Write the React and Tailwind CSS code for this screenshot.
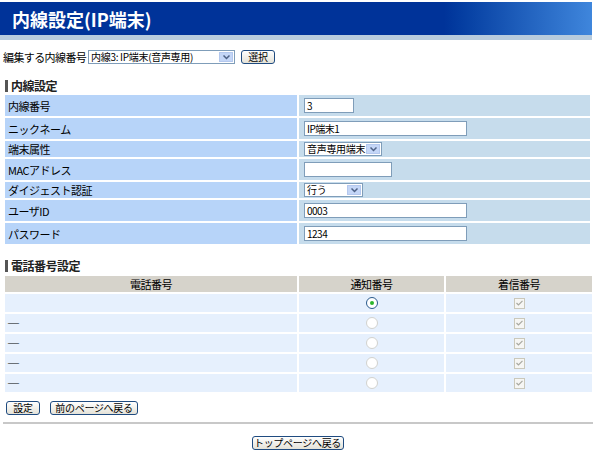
import React from "react";

const font = { fontFamily: '"Noto Sans CJK JP", "Noto Sans", sans-serif' };

function Btn({ children, className = "" }) {
  return (
    <button
      className={`h-[14px] px-[4px] border border-[#1f4b80] rounded-[3px] bg-gradient-to-b from-white to-[#e4e2d8] text-[10px] leading-[12px] tracking-[-0.3px] text-black whitespace-nowrap flex items-center justify-center ${className}`}
    >
      {children}
    </button>
  );
}

function TextBox({ value, w }) {
  return (
    <div
      className={`h-[15px] ${w} border border-[#7f9db9] bg-white text-[10px] leading-[13px] pl-[2px] whitespace-nowrap`}
    >
      {value}
    </div>
  );
}

function SelectBox({ value, w }) {
  return (
    <div className={`h-[14px] ${w} flex items-center border border-[#7f9db9] bg-white`}>
      <div className="flex-1 min-w-0 text-[10px] leading-[12px] pl-[2px] tracking-[-0.3px] whitespace-nowrap">{value}</div>
      <div className="w-[14px] h-[10px] mr-px bg-[#c4d6f7] border border-[#b4c8ee] flex items-center justify-center">
        <svg width="7" height="5" viewBox="0 0 7 5">
          <path d="M0.5 0.5 L3.5 3.5 L6.5 0.5" fill="none" stroke="#4d6185" strokeWidth="1.5" />
        </svg>
      </div>
    </div>
  );
}

function SectionTitle({ children }) {
  return (
    <div className="flex items-center gap-[3px] pl-[5px] h-[14px]">
      <span className="w-[3px] h-[12px] bg-[#555]" />
      <span className="text-[12px] leading-[14px] font-bold text-[#222] tracking-[-0.5px]">{children}</span>
    </div>
  );
}

function Radio({ checked }) {
  return checked ? (
    <span className="w-[12px] h-[12px] rounded-full border border-[#2a5a8c] bg-white flex items-center justify-center">
      <span className="w-[4px] h-[4px] rounded-full bg-[#2cb52c]" />
    </span>
  ) : (
    <span className="w-[12px] h-[12px] rounded-full border border-[#d2d2ce] bg-white" />
  );
}

function Check() {
  return (
    <span className="w-[11px] h-[11px] border border-[#cac8bb] bg-[#f6f6f4] flex items-center justify-center">
      <svg width="7" height="6" viewBox="0 0 7 6">
        <path d="M0.5 3 L2.5 5 L6.5 0.8" fill="none" stroke="#a8a8a0" strokeWidth="1.2" />
      </svg>
    </span>
  );
}

const rows = [
  { label: "内線番号", h: "h-[21px]", ctl: <TextBox value="3" w="w-[50px]" /> },
  { label: "ニックネーム", h: "h-[21px]", ctl: <TextBox value="IP端末1" w="w-[163px]" /> },
  { label: "端末属性", h: "h-[16px]", ctl: <SelectBox value="音声専用端末" w="w-[78px]" /> },
  { label: "MACアドレス", h: "h-[21px]", ctl: <TextBox value="" w="w-[88px]" /> },
  { label: "ダイジェスト認証", h: "h-[16px]", ctl: <SelectBox value="行う" w="w-[59px]" /> },
  { label: "ユーザID", h: "h-[21px]", ctl: <TextBox value="0003" w="w-[163px]" /> },
  { label: "パスワード", h: "h-[21px]", ctl: <TextBox value="1234" w="w-[163px]" /> },
];

const phones = [
  { num: "", checked: true },
  { num: "―", checked: false },
  { num: "―", checked: false },
  { num: "―", checked: false },
  { num: "―", checked: false },
];

export default function App() {
  return (
    <div className="w-[600px] h-[457px] bg-white text-black overflow-hidden" style={font}>
      <div className="pt-[2px] w-[592px]">
        <div className="h-[33px] flex items-center pl-[12px] bg-gradient-to-r from-[#003399] from-75% to-[#3f86dc]">
          <h1 className="text-[18px] leading-[20px] font-bold text-white">内線設定(IP端末)</h1>
        </div>
        <div className="h-[5px] bg-[#b7cbdd]" />
      </div>

      <div className="mt-[10px] flex items-center h-[14px] pl-[3px]">
        <span className="text-[11px] leading-[14px] tracking-[-0.6px] w-[85px] whitespace-nowrap">編集する内線番号</span>
        <SelectBox value="内線3: IP端末(音声専用)" w="w-[147px]" />
        <Btn className="ml-[6px] w-[34px]">選択</Btn>
      </div>

      <div className="mt-[15px]">
        <SectionTitle>内線設定</SectionTitle>
      </div>

      <table className="ml-[3px] mt-0 border-separate border-spacing-[2px] text-[11px] tracking-[-0.5px]">
        <tbody>
          {rows.map((r) => (
            <tr key={r.label} className={r.h}>
              <td className="w-[292px] bg-[#b7d4f9] pl-[3px] leading-[14px] p-0 whitespace-nowrap">{r.label}</td>
              <td className="w-[291px] bg-[#c6dcec] pl-[5px] p-0">{r.ctl}</td>
            </tr>
          ))}
        </tbody>
      </table>

      <div className="mt-[13px]">
        <SectionTitle>電話番号設定</SectionTitle>
      </div>

      <table className="ml-[3px] mt-[1px] border-separate border-spacing-[2px] text-[11px] tracking-[-0.5px]">
        <thead>
          <tr className="h-[16px]">
            <th className="w-[292px] bg-[#d6d3cb] font-normal leading-[14px] p-0">電話番号</th>
            <th className="w-[145px] bg-[#d6d3cb] font-normal leading-[14px] p-0">通知番号</th>
            <th className="w-[146px] bg-[#d6d3cb] font-normal leading-[14px] p-0">着信番号</th>
          </tr>
        </thead>
        <tbody>
          {phones.map((p, i) => (
            <tr key={i} className="h-[18px]">
              <td className="bg-[#e6f0fd] pl-[2px] p-0">
                <span className="text-[13px] leading-[14px] tracking-normal">{p.num}</span>
              </td>
              <td className="bg-[#e6f0fd] p-0">
                <div className="flex justify-center">
                  <Radio checked={p.checked} />
                </div>
              </td>
              <td className="bg-[#e6f0fd] p-0">
                <div className="flex justify-center">
                  <Check />
                </div>
              </td>
            </tr>
          ))}
        </tbody>
      </table>

      <div className="mt-[7px] flex gap-[10px] pl-[6px]">
        <Btn className="w-[34px]">設定</Btn>
        <Btn className="w-[88px]">前のページへ戻る</Btn>
      </div>

      <div className="mt-[7px] ml-[3px] w-[590px] h-[2px] bg-[#c8c8c8]" />

      <div className="mt-[12px] flex justify-center pr-[5px]">
        <Btn className="w-[92px]">トップページへ戻る</Btn>
      </div>
    </div>
  );
}
